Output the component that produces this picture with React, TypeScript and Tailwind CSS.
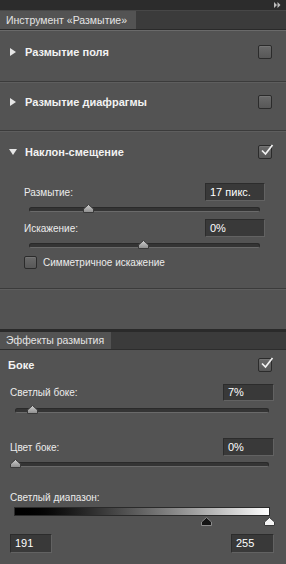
import React from "react";

const Tri = ({ open }: { open?: boolean }) =>
  open ? (
    <svg width="8" height="8" viewBox="0 0 8 8" className="shrink-0">
      <path d="M0 1 L8 1 L4 7 Z" fill="#e6e6e6" />
    </svg>
  ) : (
    <svg width="8" height="8" viewBox="0 0 8 8" className="shrink-0">
      <path d="M1 0 L7 4 L1 8 Z" fill="#e6e6e6" />
    </svg>
  );

const Check = ({ checked, size = 14 }: { checked?: boolean; size?: number }) => (
  <div
    className={`relative shrink-0 rounded-[2px] border border-[#2b2b2b] bg-gradient-to-b from-[#6a6a6a] to-[#575757] shadow-[inset_0_1px_0_#747474] ${
      size === 14 ? "w-[14px] h-[14px]" : "w-[13px] h-[13px]"
    }`}
  >
    {checked && (
      <svg className="absolute -top-[3px] left-[1px]" width="14" height="14" viewBox="0 0 14 14">
        <path d="M2 7.5 L5.5 11 L12.5 2" stroke="#f2f2f2" strokeWidth="1.7" fill="none" />
      </svg>
    )}
  </div>
);

const Field = ({ value, w, h = 18 }: { value: string; w: string; h?: number }) => (
  <div
    className={`${w} ${h === 19 ? "h-[19px]" : h === 17 ? "h-[17px]" : "h-[18px]"} bg-[#393939] border border-[#2c2c2c] border-b-[#626262] border-r-[#626262] pl-[4px] flex items-center text-white text-[11px]`}
  >
    {value}
  </div>
);

const Thumb = ({ dark, light }: { dark?: boolean; light?: boolean }) => (
  <svg width="11" height="9" viewBox="0 0 11 9">
    <defs>
      <linearGradient id="tg" x1="0" y1="0" x2="0" y2="1">
        <stop offset="0" stopColor="#d0d0d0" />
        <stop offset="1" stopColor="#8c8c8c" />
      </linearGradient>
    </defs>
    <path
      d="M5.5 0.5 L10.5 5 L10.5 8.5 L0.5 8.5 L0.5 5 Z"
      fill={dark ? "#151515" : light ? "#f4f4f4" : "url(#tg)"}
      stroke={dark ? "#8a8a8a" : "#3a3a3a"}
      strokeWidth="1"
    />
  </svg>
);

const Slider = ({ pct, cls }: { pct: number; cls: string }) => (
  <div className={`relative h-[5px] ${cls}`}>
    <div className="h-[5px] rounded-[3px] bg-[#343434] border border-[#2a2a2a] border-b-[#6a6a6a]" />
    <div className="absolute -top-[3px]" style={{ left: `calc(${pct}% - 5px)` }}>
      <Thumb />
    </div>
  </div>
);

const Sep = () => <div className="h-[2px] border-t border-[#3b3b3b] border-b border-b-[#5e5e5e]" />;

export default function App() {
  return (
    <div
      className="w-[286px] h-[564px] bg-[#535353] text-[#ececec] text-[11px] leading-[13px] flex flex-col overflow-hidden"
      style={{ fontFamily: '"Liberation Sans", Arial, sans-serif' }}
    >
      {/* top strip */}
      <div className="h-[10px] bg-[#2c2c2c] flex justify-end items-center pr-[5px]">
        <svg width="7" height="6" viewBox="0 0 7 6">
          <path d="M0 0 L3 3 L0 6 Z M3.5 0 L6.5 3 L3.5 6 Z" fill="#bdbdbd" />
        </svg>
      </div>

      {/* tab row */}
      <div className="h-[20px] bg-[#3b3b3b] flex border-t border-[#474747] border-b border-b-[#2a2a2a]">
        <div className="w-[136px] bg-[#535353] pl-[6px] flex items-center text-[#e4e4e4] text-[10.5px]">Инструмент «Размытие»</div>
      </div>

      <div className="border-t border-[#6a6a6a] flex flex-col">
        <div className="h-[50px] flex items-start justify-between pt-[14px] pl-[9px] pr-[14px]">
          <div className="flex items-center gap-[8px] h-[14px] font-bold text-[#f2f2f2]">
            <Tri />
            Размытие поля
          </div>
          <Check />
        </div>
        <Sep />
        <div className="h-[47px] flex items-start justify-between pt-[12px] pl-[9px] pr-[14px]">
          <div className="flex items-center gap-[8px] h-[14px] font-bold text-[#f2f2f2]">
            <Tri />
            Размытие диафрагмы
          </div>
          <Check />
        </div>
        <Sep />
        <div className="flex items-start justify-between pt-[13px] pl-[9px] pr-[14px]">
          <div className="flex items-center gap-[8px] h-[14px] font-bold text-[#f2f2f2]">
            <Tri open />
            Наклон-смещение
          </div>
          <Check checked />
        </div>

        <div className="mt-[24px] flex items-center justify-between pl-[24px] pr-[21px] text-[10px]">
          <span>Размытие:</span>
          <Field value="17 пикс." w="w-[60px]" />
        </div>
        <Slider pct={25.5} cls="mt-[6px] ml-[29px] mr-[26px]" />
        <div className="mt-[7px] flex items-center justify-between pl-[24px] pr-[21px] text-[10px]">
          <span>Искажение:</span>
          <Field value="0%" w="w-[60px]" />
        </div>
        <Slider pct={49.4} cls="mt-[6px] ml-[29px] mr-[26px]" />
        <div className="mt-[8px] pl-[24px] flex items-center gap-[6px] text-[10px]">
          <Check size={13} />
          <span>Симметричное искажение</span>
        </div>
        <div className="mt-[19px]">
          <Sep />
        </div>
      </div>

      <div className="flex-1" />

      {/* blur effects panel */}
      <div className="h-[3px] bg-[#2a2a2a]" />
      <div className="h-[18px] bg-[#3b3b3b] flex border-b border-[#2d2d2d]">
        <div className="w-[111px] bg-[#535353] pl-[6px] flex items-center text-[#e4e4e4] text-[10.5px]">Эффекты размытия</div>
      </div>
      <div className="h-[214px] shrink-0 flex flex-col text-[10px]">
        <div className="pt-[8px] pl-[8px] pr-[14px] flex items-center justify-between text-[11px]">
          <span className="font-bold text-[#f2f2f2]">Боке</span>
          <Check checked />
        </div>
        <div className="mt-[12px] flex items-center justify-between pl-[10px] pr-[12px]">
          <span>Светлый боке:</span>
          <Field value="7%" w="w-[51px]" h={17} />
        </div>
        <Slider pct={6.7} cls="mt-[7px] ml-[15px] mr-[17px]" />
        <div className="mt-[25px] flex items-center justify-between pl-[10px] pr-[12px]">
          <span>Цвет боке:</span>
          <Field value="0%" w="w-[51px]" />
        </div>
        <Slider pct={0} cls="mt-[6px] ml-[15px] mr-[17px]" />
        <div className="mt-[24px] pl-[10px]">Светлый диапазон:</div>
        <div className="mt-[3px] ml-[14px] mr-[16px]">
          <div className="h-[9px] border border-[#2a2a2a] bg-gradient-to-r from-black to-white" />
          <div className="relative h-[9px] mt-[1px]">
            <div className="absolute top-0" style={{ left: "calc(75% - 5px)" }}>
              <Thumb dark />
            </div>
            <div className="absolute top-0" style={{ left: "calc(100% - 6px)" }}>
              <Thumb light />
            </div>
          </div>
        </div>
        <div className="mt-[8px] flex justify-between pl-[10px] pr-[12px]">
          <Field value="191" w="w-[42px]" h={19} />
          <Field value="255" w="w-[43px]" h={19} />
        </div>
      </div>
    </div>
  );
}
